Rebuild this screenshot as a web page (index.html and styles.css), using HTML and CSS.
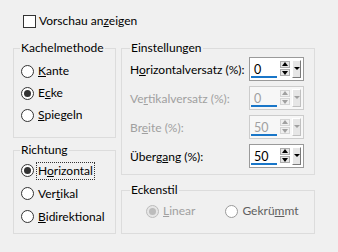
FILE: index.html
```html
<!DOCTYPE html>
<html lang="de">
<head>
	<meta charset="UTF-8">
	<title>Kacheln</title>
	<link rel="stylesheet" href="styles.css">
</head>
<body>
	<div class="dialog">
		<label class="preview"><span class="check"></span>Vorschau an<u>z</u>eigen</label>

		<div class="columns">
			<div class="col left">
				<fieldset class="grp tile">
					<legend>Kachelmethode</legend>
					<div class="opt"><span class="radio"></span><u>K</u>ante</div>
					<div class="opt"><span class="radio on"></span>E<u>c</u>ke</div>
					<div class="opt"><span class="radio"></span><u>S</u>piegeln</div>
				</fieldset>
				<fieldset class="grp dir">
					<legend>Richtung</legend>
					<div class="opt"><span class="radio on"></span><span class="focus">H<u>o</u>rizontal</span></div>
					<div class="opt"><span class="radio"></span>Ver<u>t</u>ikal</div>
					<div class="opt"><span class="radio"></span><u>B</u>idirektional</div>
				</fieldset>
			</div>

			<div class="col right">
				<fieldset class="grp settings">
					<legend>Einstellungen</legend>
					<div class="row">
						<span>H<u>o</u>rizontalversatz (%):</span>
						<div class="spin"><span class="val">0</span><span class="arrows"><b class="up"></b><b class="dn"></b></span><b class="drop"></b></div>
					</div>
					<div class="row off">
						<span>Ve<u>r</u>tikalversatz (%):</span>
						<div class="spin"><span class="val">0</span><span class="arrows"><b class="up"></b><b class="dn"></b></span><b class="drop"></b></div>
					</div>
					<div class="row off">
						<span>Br<u>e</u>ite (%):</span>
						<div class="spin"><span class="val">50</span><span class="arrows"><b class="up"></b><b class="dn"></b></span><b class="drop"></b></div>
					</div>
					<div class="row">
						<span>Überg<u>a</u>ng (%):</span>
						<div class="spin"><span class="val">50</span><span class="arrows"><b class="up"></b><b class="dn"></b></span><b class="drop"></b></div>
					</div>
				</fieldset>
				<fieldset class="grp corner">
					<legend>Eckenstil</legend>
					<div class="inline">
						<div class="opt dim"><span class="radio on"></span><u>L</u>inear</div>
						<div class="opt half"><span class="radio"></span>Gekrü<u>m</u>mt</div>
					</div>
				</fieldset>
			</div>
		</div>
	</div>
</body>
</html>
```

FILE: styles.css
```css
/*common*/
*{
	margin: 0;
	padding: 0;
	box-sizing: border-box;
}
body{
	background-color: #f0f0f0;
	font-family: Lato, "Open Sans", sans-serif;
	font-size: 12px;
	color: #000;
	white-space: nowrap;
}
.dialog{
	width: 338px;
	height: 252px;
	padding: 13px 0 0 13px;
}

/*checkbox*/
.preview{
	display: flex;
	align-items: center;
	height: 16px;
	line-height: 16px;
	margin-left: 10px;
}
.check{
	width: 13px;
	height: 13px;
	border: 1px solid #333;
	background-color: #fff;
	margin-right: 3px;
}

/*columns*/
.columns{
	display: flex;
	gap: 5px;
	margin-top: 11px;
}
.col{
	display: flex;
	flex-direction: column;
}
.left{
	width: 103px;
	gap: 4px;
}
.right{
	width: 194px;
	gap: 7px;
}

/*groups*/
.grp{
	border: 1px solid #dcdcdc;
	padding: 0 6px;
}
.grp legend{
	padding: 0 1px;
	line-height: 16px;
	height: 16px;
}
.tile{
	height: 98px;
	padding-top: 4px;
}
.dir{
	height: 92px;
	padding-top: 1px;
}
.settings{
	height: 135px;
	padding: 1px 10px 0 8px;
}
.corner{
	height: 52px;
	padding: 2px 8px 0 8px;
}

/*radios*/
.opt{
	display: flex;
	align-items: center;
	height: 22px;
	line-height: 16px;
	margin-left: 1px;
}
.dir .opt{
	height: 23px;
}
.radio{
	position: relative;
	width: 13px;
	height: 13px;
	border: 1px solid #333;
	border-radius: 50%;
	background-color: #fff;
	margin-right: 4px;
	flex-shrink: 0;
}
.radio.on::after{
	content: "";
	position: absolute;
	left: 2px;
	top: 2px;
	width: 7px;
	height: 7px;
	border-radius: 50%;
	background-color: #333;
}
.focus{
	outline: 1px dotted #333;
	outline-offset: 0;
	padding: 0 1px;
	margin-left: -1px;
}
.inline{
	display: flex;
}
.inline .opt{
	margin-left: 16px;
}
.inline .half{
	margin-left: 30px;
}
.dim{
	color: #a0a0a0;
}
.dim .radio{
	border-color: #bcbcbc;
	background-color: #e6e6e6;
}
.dim .radio.on::after{
	background-color: #bcbcbc;
}
.half{
	color: #5f5f5f;
}
.half .radio{
	border-color: #9a9a9a;
}

/*spin rows*/
.row{
	display: flex;
	justify-content: space-between;
	align-items: center;
	height: 24px;
	margin-bottom: 5px;
}
.row.off{
	color: #a0a0a0;
}
.spin{
	display: flex;
	width: 55px;
	height: 24px;
	border: 1px solid #9a9a9a;
	background-color: #fff;
	padding: 2px 2px 2px 1px;
	font-size: 12.5px;
}
.val{
	width: 27px;
	padding-left: 3px;
	line-height: 17px;
	border-bottom: 2px solid #1976c8;
	margin-top: 1px;
}
.arrows{
	display: flex;
	flex-direction: column;
	gap: 1px;
	margin: 1px 0 0 3px;
}
.arrows b{
	position: relative;
	display: block;
	width: 10px;
	height: 7px;
	border: 1px solid #adadad;
	background-color: #e5e5e5;
}
.arrows b::after{
	content: "";
	position: absolute;
	left: 1px;
	border-left: 3px solid transparent;
	border-right: 3px solid transparent;
}
.up::after{
	top: 0;
	border-bottom: 4px solid #000;
}
.dn::after{
	top: 1px;
	border-top: 4px solid #000;
}
.drop{
	position: relative;
	display: block;
	width: 10px;
	height: 18px;
	margin-left: 2px;
	border: 1px solid #fff;
	border-right-color: #7a7a7a;
	border-bottom-color: #7a7a7a;
	background-color: #e6e6e6;
}
.drop::after{
	content: "";
	position: absolute;
	left: 1px;
	top: 6px;
	border-left: 3px solid transparent;
	border-right: 3px solid transparent;
	border-top: 3px solid #000;
}
.off .spin{
	border-color: #cccccc;
	background-color: #f7f7f7;
}
.off .arrows b{
	border-color: #d5d5d5;
	background-color: #efefef;
}
.off .up::after{
	border-bottom-color: #a0a0a0;
}
.off .dn::after{
	border-top-color: #a0a0a0;
}
.off .drop{
	border-right-color: #c0c0c0;
	border-bottom-color: #c0c0c0;
}
.off .drop::after{
	border-top-color: #a0a0a0;
}
```
